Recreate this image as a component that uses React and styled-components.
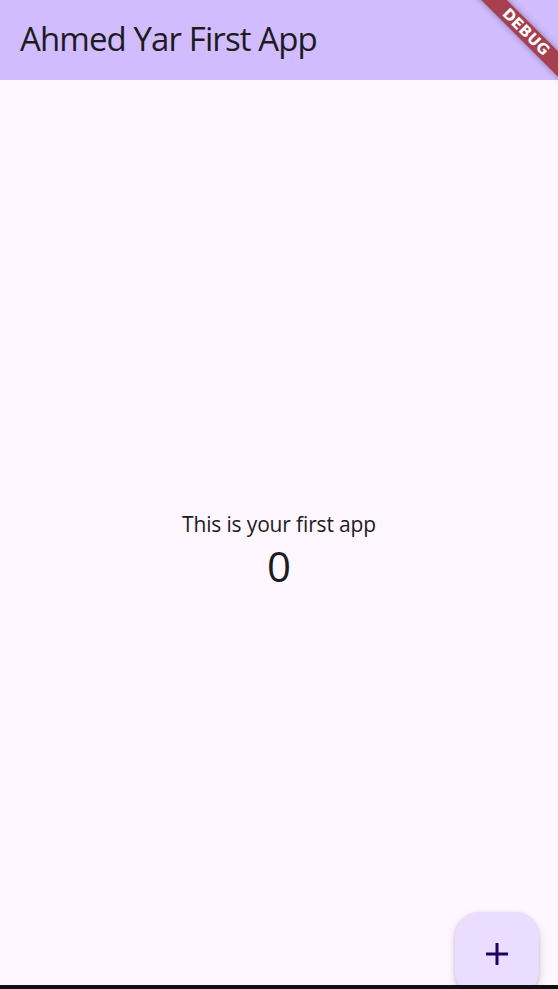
import React, { useState } from "react";
import styled, { createGlobalStyle } from "styled-components";

const Global = createGlobalStyle`
  html, body { margin: 0; padding: 0; }
  body { font-family: "Open Sans", "Noto Sans", sans-serif; background: #fef7ff; }
`;

const Screen = styled.div`
  position: relative;
  width: 558px;
  height: 989px;
  display: flex;
  flex-direction: column;
  overflow: hidden;
  background: #fef7ff;
  color: #1d1b20;
`;

const AppBar = styled.header`
  height: 80px;
  flex: none;
  display: flex;
  align-items: center;
  padding-left: 20px;
  background: #d0bcff;
`;

const Title = styled.h1`
  margin: 0;
  font-size: 33px;
  font-weight: 400;
  color: #1d1b20;
  letter-spacing: -0.9px;
  line-height: 40px;
  transform: translateY(-1px);
`;

const Body = styled.main`
  flex: 1;
  display: flex;
  flex-direction: column;
  align-items: center;
  justify-content: center;
  padding-top: 36px;
`;

const Label = styled.div`
  font-size: 21px;
  line-height: 30px;
  letter-spacing: -0.15px;
`;

const Count = styled.div`
  font-size: 42px;
  line-height: 54px;
`;

const NavBar = styled.div`
  height: 4px;
  flex: none;
  background: #111012;
  position: relative;
  z-index: 2;
`;

const Fab = styled.button`
  position: absolute;
  left: 455px;
  top: 912px;
  width: 84px;
  height: 84px;
  border: none;
  border-radius: 24px;
  background: #eaddff;
  color: #21005d;
  display: flex;
  align-items: center;
  justify-content: center;
  padding: 0;
  box-shadow: 0 4px 9px rgba(0, 0, 0, 0.18), 0 1px 3px rgba(0, 0, 0, 0.12);
  z-index: 1;
  cursor: pointer;
`;

const Banner = styled.div`
  position: absolute;
  left: 466px;
  top: 23px;
  width: 120px;
  height: 18px;
  transform: rotate(45deg);
  background: #a6404f;
  color: #fff;
  display: flex;
  align-items: center;
  justify-content: center;
  font-family: "DejaVu Sans", sans-serif;
  font-weight: 700;
  font-size: 15px;
  letter-spacing: 0.2px;
  box-shadow: 0 0 6px rgba(0, 0, 0, 0.35);
  z-index: 3;
`;

export default function App() {
  const [count, setCount] = useState(0);
  return (
    <Screen>
      <Global />
      <AppBar>
        <Title>Ahmed Yar First App</Title>
      </AppBar>
      <Body>
        <Label>This is your first app</Label>
        <Count>{count}</Count>
      </Body>
      <NavBar />
      <Fab onClick={() => setCount(count + 1)} aria-label="Increment">
        <svg width="22" height="22" viewBox="0 0 22 22">
          <path d="M11 0v22M0 11h22" stroke="currentColor" strokeWidth="3" />
        </svg>
      </Fab>
      <Banner>DEBUG</Banner>
    </Screen>
  );
}
